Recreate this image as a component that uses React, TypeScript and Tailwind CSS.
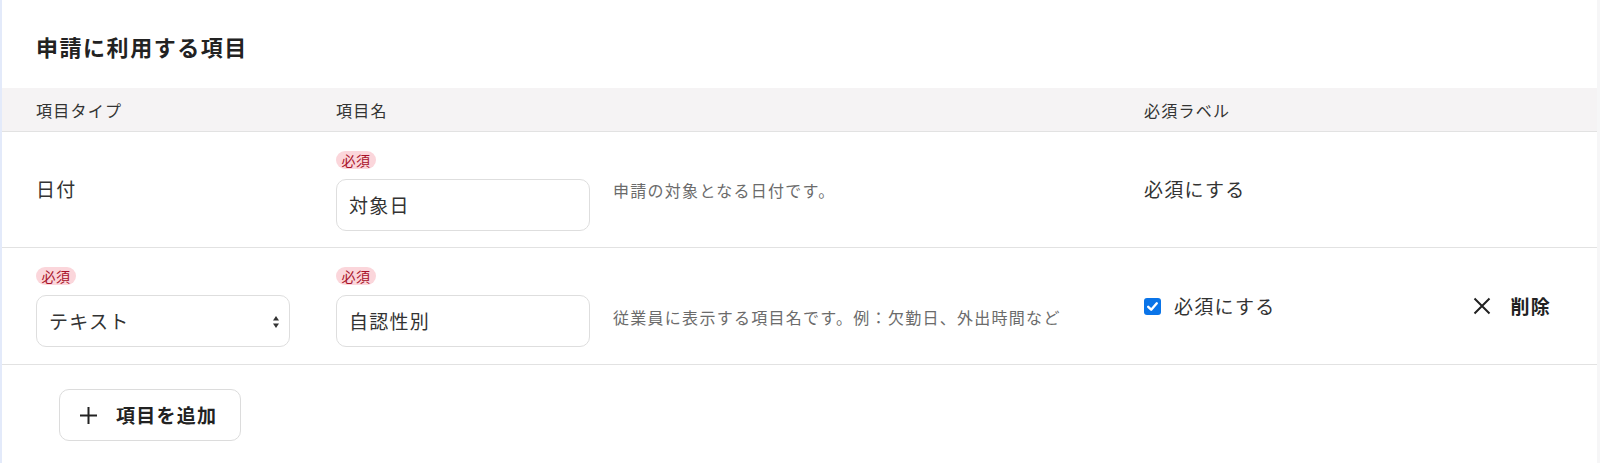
const font = 'font-["Meiryo","Noto_Sans_CJK_JP",sans-serif]';

function Badge() {
  return (
    <span className="inline-flex h-[18px] w-[40px] items-center justify-center rounded-full bg-[#fbd6db] text-[14px] leading-none tracking-[0.04em] text-[#a8122a]">
      必須
    </span>
  );
}

function TextBox({ value }: { value: string }) {
  return (
    <div className="flex h-[52px] w-[254px] items-center rounded-[10px] border border-[#dedede] bg-white px-[12px] text-[19px] text-[#333]">
      {value}
    </div>
  );
}

function SelectBox({ value }: { value: string }) {
  return (
    <div className="flex h-[52px] w-[254px] items-center justify-between rounded-[10px] border border-[#dedede] bg-white pl-[12px] pr-[10px] text-[19px] text-[#333]">
      <span>{value}</span>
      <svg width="6" height="14" viewBox="0 0 6 14" className="mt-[2px]">
        <path d="M3 1 L6 5.5 H0 Z" fill="#333" />
        <path d="M3 13 L6 8.5 H0 Z" fill="#333" />
      </svg>
    </div>
  );
}

function CheckMark() {
  return (
    <span className="flex h-[17px] w-[17px] items-center justify-center rounded-[3px] bg-[#0a74e8]">
      <svg width="13" height="13" viewBox="0 0 13 13">
        <path d="M2.2 6.8 L5.2 9.7 L10.8 3.3" fill="none" stroke="#fff" strokeWidth="2.4" strokeLinecap="round" strokeLinejoin="round" />
      </svg>
    </span>
  );
}

export default function App() {
  return (
    <div className={`min-h-[463px] bg-[#f6f6f7] tracking-[0.08em] text-[#333] ${font}`}>
      <div className="mr-[3px] min-h-[463px] border-l-2 border-[#e3eafa] bg-white">
        <h2 className="pl-[34px] pt-[33px] text-[22px] font-bold leading-[26px] tracking-[0.07em] text-[#222]">
          申請に利用する項目
        </h2>

        <div className="mt-[29px]">
          <div className="grid h-[44px] grid-cols-[300px_277px_531px_1fr] items-center border-b border-[#e2e2e2] bg-[#f5f3f4] pl-[34px] text-[16px] text-[#333]">
            <div>項目タイプ</div>
            <div>項目名</div>
            <div />
            <div>必須ラベル</div>
          </div>

          <div className="grid grid-cols-[300px_277px_531px_1fr] border-b border-[#e2e2e2] pl-[34px]">
            <div className="flex items-center text-[19px]">日付</div>
            <div className="flex flex-col gap-[10px] pb-[16px] pt-[19px]">
              <Badge />
              <TextBox value="対象日" />
            </div>
            <div className="flex items-center text-[16px] text-[#6b6b6b]">申請の対象となる日付です。</div>
            <div className="flex items-center text-[19px]">必須にする</div>
          </div>

          <div className="grid grid-cols-[300px_277px_531px_1fr] border-b border-[#e2e2e2] pl-[34px]">
            <div className="flex flex-col gap-[10px] pb-[17px] pt-[19px]">
              <Badge />
              <SelectBox value="テキスト" />
            </div>
            <div className="flex flex-col gap-[10px] pb-[17px] pt-[19px]">
              <Badge />
              <TextBox value="自認性別" />
            </div>
            <div className="flex items-end pb-[35px] text-[16px] text-[#6b6b6b]">
              従業員に表示する項目名です。例：欠勤日、外出時間など
            </div>
            <div className="flex items-center pr-[46px]">
              <CheckMark />
              <span className="ml-[13px] text-[19px]">必須にする</span>
              <button className="ml-auto flex items-center gap-[19px] text-[19px] font-bold text-[#222]">
                <svg width="18" height="18" viewBox="0 0 18 18">
                  <path d="M1.5 1.5 L16.5 16.5 M16.5 1.5 L1.5 16.5" stroke="#222" strokeWidth="2" />
                </svg>
                <span>削除</span>
              </button>
            </div>
          </div>
        </div>

        <div className="pl-[57px] pt-[24px]">
          <button className="flex h-[52px] w-[182px] items-center gap-[18px] rounded-[10px] border border-[#dcdcdc] bg-white pl-[19px] text-[19px] font-bold text-[#222]">
            <svg width="19" height="19" viewBox="0 0 19 19">
              <path d="M9.5 1 V18 M1 9.5 H18" stroke="#222" strokeWidth="2" />
            </svg>
            <span>項目を追加</span>
          </button>
        </div>
      </div>
    </div>
  );
}
